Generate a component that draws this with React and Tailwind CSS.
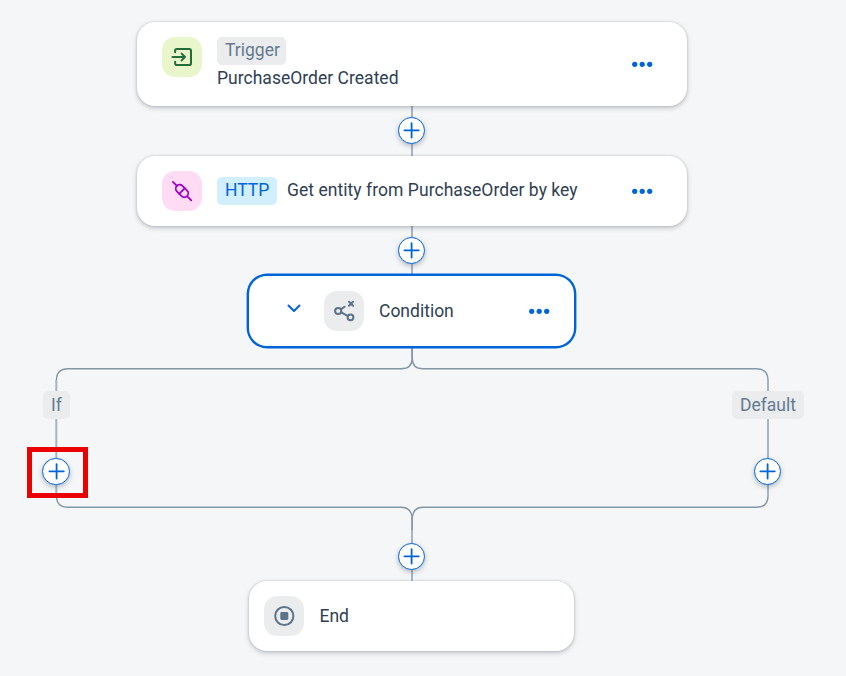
import React from "react";

const cardShadow =
  "shadow-[0_0_2px_rgba(34,53,72,0.25),0_2px_5px_rgba(34,53,72,0.25)]";

function Node({ place, className = "", children }) {
  return (
    <section className={`absolute flex bg-white ${place} ${className}`}>
      {children}
    </section>
  );
}

function Tile({ className, children }) {
  return (
    <span className={`flex size-10 shrink-0 items-center justify-center rounded-[13px] ${className}`}>
      {children}
    </span>
  );
}

function More({ className }) {
  return (
    <button aria-label="More actions" className={`shrink-0 ${className}`}>
      <svg width="21" height="6" viewBox="0 0 21 6" fill="#0064d9">
        <circle cx="2.7" cy="3.3" r="2.6" />
        <circle cx="10.2" cy="3.3" r="2.6" />
        <circle cx="17.7" cy="3.3" r="2.6" />
      </svg>
    </button>
  );
}

function AddStep({ place, size = "size-[27px]" }) {
  return (
    <button
      aria-label="Add step"
      className={`absolute flex items-center justify-center rounded-full border border-[#0064d9] bg-white shadow-[0_2px_5px_rgba(34,53,72,0.3)] ${size} ${place}`}
    >
      <svg width="17" height="17" viewBox="0 0 17 17" stroke="#0064d9" strokeWidth="1.8" strokeLinecap="round">
        <path d="M8.6 1.2v14.4M1.4 8.3h14.4" />
      </svg>
    </button>
  );
}

function Connectors() {
  return (
    <svg className="absolute inset-0" width="846" height="676" fill="none">
      <g stroke="#a6b5c4" strokeWidth="2">
        <path d="M412 106V156M412 226V275M412 347V358M412 518V581M56.3 380V496M768 380V496" />
      </g>
      <g stroke="#8396a8" strokeWidth="1.4">
        <path d="M412.2 348V358Q412.2 368.8 401 368.8H68Q56.5 368.8 56.5 380M56.5 496Q56.5 507.3 68 507.3H401Q412.2 507.3 412.2 520V530" />
        <path d="M412.2 358Q412.2 368.8 423 368.8H756.5Q768 368.8 768 380M768 496Q768 507.3 756.5 507.3H423Q412.2 507.3 412.2 520" />
      </g>
    </svg>
  );
}

export default function App() {
  return (
    <main className="relative h-[676px] w-[846px] overflow-hidden bg-[#f5f6f7] font-[Roboto,sans-serif] text-[17.5px] leading-7 text-[#2f4052]">
      <Connectors />

      <Node place="left-[137px] top-[22px] h-[84px] w-[550px]" className={`rounded-[18px] pl-[25px] pr-[34px] ${cardShadow}`}>
        <Tile className="mt-[15px] bg-[#e9f5cb]">
          <svg width="22" height="20" viewBox="0 0 22 20" fill="none" stroke="#216e3a" strokeWidth="2" strokeLinecap="round" strokeLinejoin="round">
            <path d="M4.1 5.2V3.8Q4.1 2 5.9 2H18.2Q20 2 20 3.8V16.2Q20 18 18.2 18H5.9Q4.1 18 4.1 16.2V14.8M1.5 10H14M10.6 6.6 14 10l-3.4 3.4" />
          </svg>
        </Tile>
        <div className="ml-[15px] mt-[15px] flex flex-col items-start">
          <span className="h-7 w-[69px] rounded-[5px] bg-[#eaecee] pl-2 leading-[26px] text-[#647a91]">Trigger</span>
          <span className="leading-[26px] tracking-[0.02px]">PurchaseOrder Created</span>
        </div>
        <More className="mb-[39px] ml-auto mt-[39px]" />
      </Node>

      <Node place="left-[137px] top-[156px] h-[70px] w-[550px]" className={`items-center rounded-[18px] pl-[25px] pr-[34px] ${cardShadow}`}>
        <Tile className="bg-[#ffdcf3]">
          <svg width="22" height="22" viewBox="0 0 22 22" fill="none" stroke="#a100c2" strokeWidth="1.8" strokeLinecap="round">
            <path d="m1.9 1.9 4 4M16.3 16.3l4 4M13.8 8.2l-5.6 5.6" />
            <rect x="3.8" y="7.1" width="14.4" height="7.8" rx="3.9" transform="rotate(45 11 11)" />
          </svg>
        </Tile>
        <span className="ml-[15px] h-7 w-[60px] rounded-[5px] bg-[#d1efff] pl-2 leading-[26px] text-[#0064d9]">HTTP</span>
        <span className="-mt-0.5 ml-[10px] leading-[26px] tracking-[0.05px]">Get entity from PurchaseOrder by key</span>
        <More className="ml-auto" />
      </Node>

      <Node place="left-[249px] top-[276px] h-[70px] w-[325px]" className="items-center rounded-[18px] pl-[38px] pr-[24px] shadow-[0_0_0_2.4px_#0064d9]">
        <svg className="-mt-1.5" width="14" height="9" viewBox="0 0 14 9" fill="none" stroke="#0064d9" strokeWidth="2" strokeLinecap="round" strokeLinejoin="round">
          <path d="m1.5 1.5 5.5 5.5 5.5-5.5" />
        </svg>
        <Tile className="ml-[23px] bg-[#eaecee]">
          <svg width="22" height="22" viewBox="0 0 22 22" fill="none" stroke="#5b738b" strokeWidth="2" strokeLinecap="round">
            <circle cx="5.2" cy="11" r="3.1" />
            <circle cx="17.5" cy="17.3" r="2.9" />
            <path d="m8 9.3 3.6-2.5M8.2 12.3l6.4 3.5M16 1.8l4 4M20 1.8l-4 4" />
          </svg>
        </Tile>
        <span className="ml-[15px]">Condition</span>
        <More className="ml-auto" />
      </Node>

      <Node place="left-[249px] top-[581px] h-[70px] w-[325px]" className={`items-center rounded-[18px] pl-[15px] ${cardShadow}`}>
        <Tile className="bg-[#eaecee]">
          <svg width="22" height="22" viewBox="0 0 22 22" fill="none">
            <circle cx="11.3" cy="11" r="9.1" stroke="#5b738b" strokeWidth="2" />
            <rect x="7.3" y="7" width="8" height="8" rx="1.4" fill="#5b738b" />
          </svg>
        </Tile>
        <span className="ml-[15.5px]">End</span>
      </Node>

      <span className="absolute left-[43px] top-[391px] h-7 w-[27px] rounded-[5px] bg-[#eaecee] text-center text-[#647a91]">If</span>
      <span className="absolute left-[732px] top-[391px] h-7 w-[72px] rounded-[5px] bg-[#eaecee] text-center text-[#647a91]">Default</span>

      <AddStep place="left-[398px] top-[117.4px]" />
      <AddStep place="left-[398px] top-[237.4px]" />
      <AddStep place="left-[42px] top-[457.5px]" size="h-[27px] w-[28px]" />
      <AddStep place="left-[754px] top-[458px]" />
      <AddStep place="left-[398px] top-[543px]" />

      <div className="absolute left-[27px] top-[447px] h-[51px] w-[61px] border-5 border-[#eb0000]" />
    </main>
  );
}
